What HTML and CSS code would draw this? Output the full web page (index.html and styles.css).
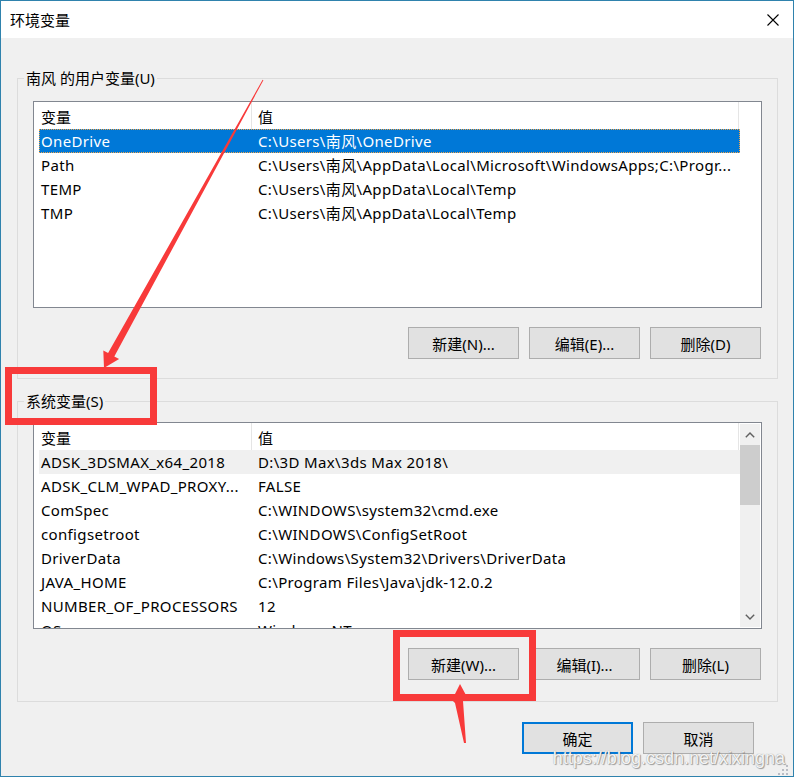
FILE: index.html
```html
<!DOCTYPE html>
<html lang="zh-CN">
<head>
<meta charset="utf-8">
<title>环境变量</title>
<link rel="stylesheet" href="styles.css">
</head>
<body>
<div class="window">
  <div class="titlebar">
    <span class="title">环境变量</span>
    <svg class="close" width="12" height="12" viewBox="0 0 12 12"><path d="M0.5 0.5 L11.5 11.5 M11.5 0.5 L0.5 11.5" stroke="#000" stroke-width="1.1" fill="none"/></svg>
  </div>
  <div class="content">
    <fieldset class="group g1">
      <legend>南风 的用户变量(U)</legend>
      <div class="list">
        <div class="list-main">
          <div class="list-head"><div class="hc hc1">变量</div><div class="hc hc2">值</div></div>
          <div class="row selected"><div class="c1">OneDrive</div><div class="c2">C:\Users\南风\OneDrive</div></div>
          <div class="row"><div class="c1">Path</div><div class="c2">C:\Users\南风\AppData\Local\Microsoft\WindowsApps;C:\Progr...</div></div>
          <div class="row"><div class="c1">TEMP</div><div class="c2">C:\Users\南风\AppData\Local\Temp</div></div>
          <div class="row"><div class="c1">TMP</div><div class="c2">C:\Users\南风\AppData\Local\Temp</div></div>
        </div>
      </div>
      <div class="btns">
        <button class="btn">新建(N)...</button>
        <button class="btn">编辑(E)...</button>
        <button class="btn">删除(D)</button>
      </div>
    </fieldset>
    <fieldset class="group g2">
      <legend>系统变量(S)</legend>
      <div class="list">
        <div class="list-main">
          <div class="list-head"><div class="hc hc1">变量</div><div class="hc hc2">值</div></div>
          <div class="row hover"><div class="c1">ADSK_3DSMAX_x64_2018</div><div class="c2">D:\3D Max\3ds Max 2018\</div></div>
          <div class="row"><div class="c1">ADSK_CLM_WPAD_PROXY...</div><div class="c2">FALSE</div></div>
          <div class="row"><div class="c1">ComSpec</div><div class="c2">C:\WINDOWS\system32\cmd.exe</div></div>
          <div class="row"><div class="c1">configsetroot</div><div class="c2">C:\WINDOWS\ConfigSetRoot</div></div>
          <div class="row"><div class="c1">DriverData</div><div class="c2">C:\Windows\System32\Drivers\DriverData</div></div>
          <div class="row"><div class="c1">JAVA_HOME</div><div class="c2">C:\Program Files\Java\jdk-12.0.2</div></div>
          <div class="row"><div class="c1">NUMBER_OF_PROCESSORS</div><div class="c2">12</div></div>
          <div class="row"><div class="c1">OS</div><div class="c2">Windows_NT</div></div>
        </div>
        <div class="scrollbar">
          <div class="sb-arrow"><svg width="10" height="6" viewBox="0 0 10 6"><path d="M0.8 5.2 L5 1 L9.2 5.2" stroke="#606060" stroke-width="1.4" fill="none"/></svg></div>
          <div class="sb-thumb"></div>
          <div class="sb-track"></div>
          <div class="sb-arrow"><svg width="10" height="6" viewBox="0 0 10 6"><path d="M0.8 0.8 L5 5 L9.2 0.8" stroke="#606060" stroke-width="1.4" fill="none"/></svg></div>
        </div>
      </div>
      <div class="btns">
        <button class="btn">新建(W)...</button>
        <button class="btn">编辑(I)...</button>
        <button class="btn">删除(L)</button>
      </div>
    </fieldset>
    <div class="footer">
      <button class="btn btn-ok">确定</button>
      <button class="btn btn-cancel">取消</button>
    </div>
  </div>
  <svg class="annot" width="794" height="777" viewBox="0 0 794 777">
    <polygon fill="#f83a3a" points="263.4,80.2 114.3,356.5 119.1,359.1 104,368 103.3,350.5 108.1,353.1 262.6,79.8"/>
    <rect x="8.5" y="370.5" width="145" height="51" fill="none" stroke="#f83a3a" stroke-width="7"/>
    <rect x="396.5" y="633.5" width="136" height="64" fill="none" stroke="#f83a3a" stroke-width="7"/>
    <polygon fill="#f83a3a" points="460,684 467,697 463,701 466,743 464,743 455,703 452,700"/>
  </svg>
  <div class="watermark">https://blog.csdn.net/xixingna</div>
  <svg class="grip" width="12" height="10" viewBox="0 0 12 10">
    <g fill="#b9bcc4">
      <rect x="8" y="0" width="2" height="2"/>
      <rect x="4" y="4" width="2" height="2"/><rect x="8" y="4" width="2" height="2"/>
      <rect x="0" y="8" width="2" height="2"/><rect x="4" y="8" width="2" height="2"/><rect x="8" y="8" width="2" height="2"/>
    </g>
  </svg>
</div>
</body>
</html>
```
FILE: styles.css
```css
* { box-sizing: border-box; }
html, body { margin: 0; padding: 0; }
body {
  font-family: "Noto Sans", "Noto Sans CJK SC", sans-serif;
  font-size: 15px;
  color: #000;
  background: #f0f0f0;
}
.window {
  position: relative;
  width: 794px;
  height: 777px;
  border: 1px solid #2f82ad;
  background: #f0f0f0;
  display: flex;
  flex-direction: column;
  overflow: hidden;
}
.titlebar {
  height: 37px;
  flex: 0 0 37px;
  background: #fff;
  display: flex;
  align-items: center;
  justify-content: space-between;
  padding: 0 14px 0 9px;
}
.title { font-size: 15px; line-height: 20px; }
.close { display: block; }
.content {
  flex: 1;
  display: flex;
  flex-direction: column;
}
.group {
  margin: 0 15px 0 16px;
  border: 1px solid #dcdcdc;
  padding: 13px 15px 19px 15px;
  min-width: 0;
}
.group legend {
  margin-left: -9px;
  padding: 0 2px;
  line-height: 20px;
  font-size: 15px;
}
.g1 { margin-top: 30px; }
.g2 { margin-top: 12px; padding-top: 11px; padding-bottom: 21px; }
.list {
  height: 207px;
  border: 1px solid #828790;
  background: #fff;
  display: flex;
  overflow: hidden;
}
.list-main {
  flex: 1;
  min-width: 0;
  overflow: hidden;
}
.list-head {
  display: flex;
  height: 27px;
}
.hc {
  height: 27px;
  line-height: 24px;
  padding-top: 3px;
  white-space: nowrap;
}
.hc1 { width: 218px; padding-left: 7px; border-right: 1px solid #e5e5e5; }
.hc2 { width: 487px; padding-left: 6px; border-right: 1px solid #e5e5e5; }
.row {
  display: flex;
  height: 24px;
  line-height: 24px;
  margin-left: 5px;
  width: 701px;
  white-space: nowrap;
  letter-spacing: 0.35px;
}
.row .c1 { width: 217px; padding-left: 2px; overflow: hidden; }
.row .c2 { flex: 1; padding-left: 2px; overflow: hidden; }
.row.selected {
  background: #0078d7;
  color: #fff;
  outline: 1px dotted #f2a54a;
  outline-offset: -1px;
}
.row.hover { background: #f0f0f0; }
.scrollbar {
  width: 20px;
  flex: 0 0 20px;
  margin: 1px 1px 1px 0;
  background: #f0f0f0;
  display: flex;
  flex-direction: column;
}
.sb-arrow {
  height: 21px;
  display: flex;
  align-items: center;
  justify-content: center;
}
.sb-thumb { height: 60px; background: #cdcdcd; }
.sb-track { flex: 1; }
.btns {
  margin-top: 19px;
  display: flex;
  justify-content: flex-end;
  gap: 10px;
  padding-right: 1px;
}
.btn {
  width: 111px;
  height: 32px;
  background: #e1e1e1;
  border: 1px solid #adadad;
  font-family: "Noto Sans", "Noto Sans CJK SC", sans-serif;
  font-size: 15px;
  color: #000;
  padding: 0;
  margin: 0;
}
.footer {
  margin-top: 20px;
  display: flex;
  justify-content: flex-end;
  gap: 10px;
  padding-right: 39px;
}
.btn-ok { border: 2px solid #0078d7; }
.annot {
  position: absolute;
  left: -1px;
  top: -1px;
  pointer-events: none;
}
.watermark {
  position: absolute;
  right: 8px;
  bottom: 7px;
  font-family: "Liberation Sans", sans-serif;
  font-size: 18px;
  color: rgba(255,255,255,0.92);
  text-shadow: 0 0 1px #888, 1px 1px 1px rgba(0,0,0,0.35);
}
.grip {
  position: absolute;
  right: 3px;
  bottom: 1px;
}
```
